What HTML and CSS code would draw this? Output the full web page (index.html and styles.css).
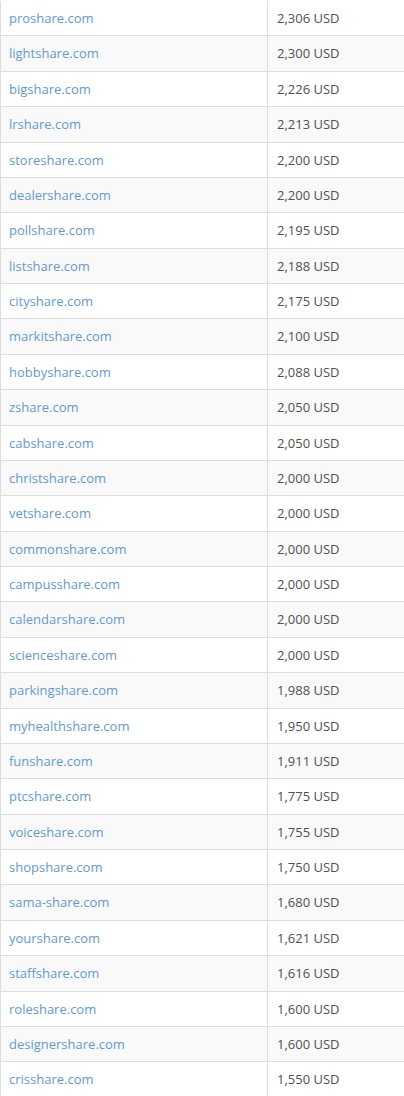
FILE: index.html
```html
<!DOCTYPE html>
<html>
<head>
<meta charset="utf-8">
<link rel="stylesheet" href="styles.css">
</head>
<body>
<table class="domains">
<tbody>
<tr><td class="name"><a href="#">proshare.com</a></td><td class="price">2,306 USD</td></tr>
<tr><td class="name"><a href="#">lightshare.com</a></td><td class="price">2,300 USD</td></tr>
<tr><td class="name"><a href="#">bigshare.com</a></td><td class="price">2,226 USD</td></tr>
<tr><td class="name"><a href="#">lrshare.com</a></td><td class="price">2,213 USD</td></tr>
<tr><td class="name"><a href="#">storeshare.com</a></td><td class="price">2,200 USD</td></tr>
<tr><td class="name"><a href="#">dealershare.com</a></td><td class="price">2,200 USD</td></tr>
<tr><td class="name"><a href="#">pollshare.com</a></td><td class="price">2,195 USD</td></tr>
<tr><td class="name"><a href="#">listshare.com</a></td><td class="price">2,188 USD</td></tr>
<tr><td class="name"><a href="#">cityshare.com</a></td><td class="price">2,175 USD</td></tr>
<tr><td class="name"><a href="#">markitshare.com</a></td><td class="price">2,100 USD</td></tr>
<tr><td class="name"><a href="#">hobbyshare.com</a></td><td class="price">2,088 USD</td></tr>
<tr><td class="name"><a href="#">zshare.com</a></td><td class="price">2,050 USD</td></tr>
<tr><td class="name"><a href="#">cabshare.com</a></td><td class="price">2,050 USD</td></tr>
<tr><td class="name"><a href="#">christshare.com</a></td><td class="price">2,000 USD</td></tr>
<tr><td class="name"><a href="#">vetshare.com</a></td><td class="price">2,000 USD</td></tr>
<tr><td class="name"><a href="#">commonshare.com</a></td><td class="price">2,000 USD</td></tr>
<tr><td class="name"><a href="#">campusshare.com</a></td><td class="price">2,000 USD</td></tr>
<tr><td class="name"><a href="#">calendarshare.com</a></td><td class="price">2,000 USD</td></tr>
<tr><td class="name"><a href="#">scienceshare.com</a></td><td class="price">2,000 USD</td></tr>
<tr><td class="name"><a href="#">parkingshare.com</a></td><td class="price">1,988 USD</td></tr>
<tr><td class="name"><a href="#">myhealthshare.com</a></td><td class="price">1,950 USD</td></tr>
<tr><td class="name"><a href="#">funshare.com</a></td><td class="price">1,911 USD</td></tr>
<tr><td class="name"><a href="#">ptcshare.com</a></td><td class="price">1,775 USD</td></tr>
<tr><td class="name"><a href="#">voiceshare.com</a></td><td class="price">1,755 USD</td></tr>
<tr><td class="name"><a href="#">shopshare.com</a></td><td class="price">1,750 USD</td></tr>
<tr><td class="name"><a href="#">sama-share.com</a></td><td class="price">1,680 USD</td></tr>
<tr><td class="name"><a href="#">yourshare.com</a></td><td class="price">1,621 USD</td></tr>
<tr><td class="name"><a href="#">staffshare.com</a></td><td class="price">1,616 USD</td></tr>
<tr><td class="name"><a href="#">roleshare.com</a></td><td class="price">1,600 USD</td></tr>
<tr><td class="name"><a href="#">designershare.com</a></td><td class="price">1,600 USD</td></tr>
<tr><td class="name"><a href="#">crisshare.com</a></td><td class="price">1,550 USD</td></tr>
</tbody>
</table>
</body>
</html>
```

FILE: styles.css
```css
html, body {
  margin: 0;
  padding: 0;
  background: #fff;
}
body {
  font-family: "Open Sans", "Liberation Sans", sans-serif;
  font-size: 13px;
  color: #505050;
}
.domains {
  border-collapse: collapse;
  width: 420px;
  margin-top: 1px;
  border-left: 1px solid #ddd;
}
.domains td {
  border-bottom: 1px solid #ddd;
  padding: 8px 8px;
  line-height: 18.37px;
  height: 18.37px;
  vertical-align: middle;
  white-space: nowrap;
}
.domains tr:nth-child(even) td {
  background: #f9f9f9;
}
.domains td.name {
  width: 250px;
  border-right: 1px solid #ddd;
}
.domains td.price {
  padding-left: 9px;
}
.domains a {
  color: #6399d2;
  text-decoration: none;
}
```
